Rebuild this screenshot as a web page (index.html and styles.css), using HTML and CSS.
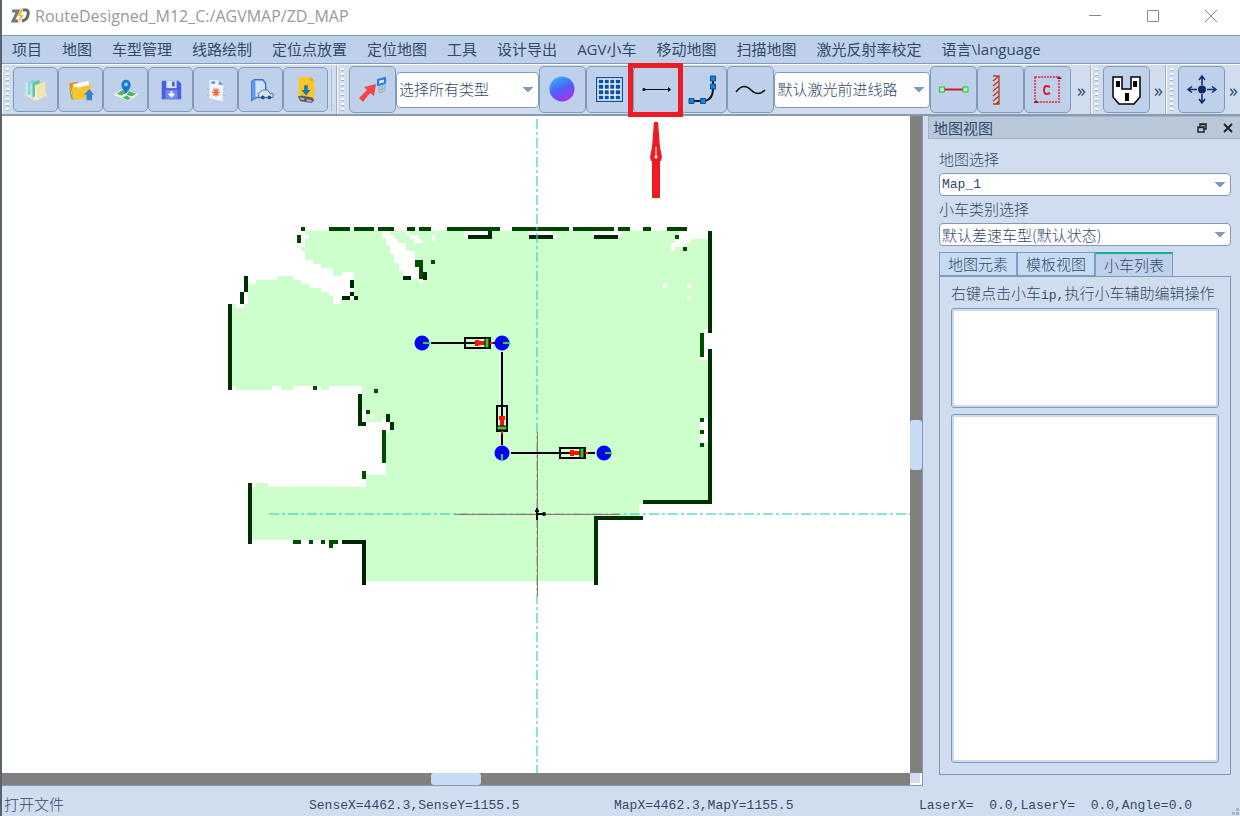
FILE: index.html
```html
<!DOCTYPE html>
<html lang="zh-CN">
<head>
  <meta charset="UTF-8">
  <meta name="viewport" content="width=device-width, initial-scale=1.0">
  <title>RouteDesigned_M12</title>
  <link rel="stylesheet" href="styles.css">
</head>
<body>
  <header class="titlebar">
    <svg class="app-icon" viewBox="0 0 20 18" aria-hidden="true">
      <path d="M2 4h6L3 14h5" fill="none" stroke="#777" stroke-width="3"/>
      <path d="M13 3h3q3 0 2 5t-6 6" fill="none" stroke="#666" stroke-width="3"/>
      <path d="M12 1L7 9h3l-2 8 6-9h-3l3-7z" fill="#eec049"/>
    </svg>
    <h1>RouteDesigned_M12_C:/AGVMAP/ZD_MAP</h1>
    <div class="window-buttons">
      <button aria-label="Minimize"><svg viewBox="0 0 12 12"><path d="M0 5.500h12"/></svg></button>
      <button aria-label="Maximize"><svg viewBox="0 0 12 12"><path d="M.5.5h11v11H.5z"/></svg></button>
      <button aria-label="Close"><svg viewBox="0 0 12 12"><path d="M0 0l12 12M12 0L0 12"/></svg></button>
    </div>
  </header>

  <nav class="menubar">
    <button>项目</button>
    <button>地图</button>
    <button>车型管理</button>
    <button>线路绘制</button>
    <button>定位点放置</button>
    <button>定位地图</button>
    <button>工具</button>
    <button>设计导出</button>
    <button>AGV小车</button>
    <button>移动地图</button>
    <button>扫描地图</button>
    <button>激光反射率校定</button>
    <button>语言\language</button>
  </nav>

  <div class="toolbar">
    <div class="tool-group file-group">
      <span class="handle"></span>
      <button class="tool" aria-label="Project">
        <svg viewBox="0 0 28 28">
          <path d="M1 19l11-5 15 5-13 7z" fill="#e9e6df"/>
          <path d="M1 19l13 7v2L1 21zM27 19l-13 7v2l13-7z" fill="#d3cfc8"/>
          <path d="M5 5l8-3v15l-8 3z" fill="#92d9da"/><path d="M3 7l2-2v15l-2-2z" fill="#c9eeee"/>
          <path d="M10 6l8-3v15l-8 4z" fill="#62c4a8"/><path d="M8 8l2-2v16l-2-2z" fill="#b7e8d9"/>
          <path d="M15 8l9-3v14l-9 4z" fill="#f1e6a8"/><path d="M13 9l2-1v15l-2-2z" fill="#faf5d4"/>
        </svg>
      </button>
      <button class="tool" aria-label="Open">
        <svg viewBox="0 0 28 28">
          <path d="M1 7l9-2 2 2 10-3 1 16H5z" fill="#e3920f"/>
          <path d="M5 8l17-4 1 6-16 4z" fill="#fff"/>
          <path d="M4 11l2 14 15-2 5-15-14 3z" fill="#fbc531"/>
          <path d="M1 9l5 16-3-2z" fill="#86b33c"/>
          <path d="M23 13l5 6h-2v6h-6v-6h-3z" fill="#2f83dc"/>
        </svg>
      </button>
      <button class="tool" aria-label="Map">
        <svg viewBox="0 0 28 28">
          <path d="M0 19l10-6 18 5-11 8z" fill="#e6f3e4"/>
          <path d="M4 18l6-4 5 3-6 3zM17 15l8 3-5 3-5-2zM10 22l5-2 4 3-3 2z" fill="#56b568"/>
          <path d="M14 18q-5-6-5-10a5 5 0 0 1 10 0q0 4-5 10z" fill="#1d76d2"/>
          <circle cx="14" cy="8" r="2" fill="#8fd0ff"/>
        </svg>
      </button>
      <button class="tool" aria-label="Save">
        <svg viewBox="0 0 28 28">
          <path d="M5 4h17l3 3v17H4V5z" fill="#4961e0"/>
          <path d="M9 4h11v8H9z" fill="#dbe4ff"/><path d="M15 5h3v5h-3z" fill="#4961e0"/>
          <path d="M8 14h13v10H8z" fill="#6f86f4"/>
          <path d="M14.500 15v6M11.500 18l3 3 3-3" stroke="#fff" stroke-width="2" fill="none"/>
        </svg>
      </button>
      <button class="tool" aria-label="Template">
        <svg viewBox="0 0 28 28">
          <path d="M7 3l10 1 5 5-1 17-14-3z" fill="#f2f5fd"/>
          <path d="M17 4l5 5-5-1z" fill="#4b8ce8"/><path d="M9 5h4v2H9z" fill="#367de0"/>
          <path d="M14 12v9M9.500 16.500h9M11 13l6 7M17 13l-6 7" stroke="#ec6a3b" stroke-width="1.500"/>
          <path d="M4 13h3M4 20h3M22 13h3M21 20h4" stroke="#b9b6bc"/>
        </svg>
      </button>
      <button class="tool" aria-label="Vehicle model">
        <svg viewBox="0 0 28 28">
          <path d="M4 5l3-2h9l3 4v15H9l-5 3z" fill="#d3e1f8" stroke="#3972d0" stroke-width="1.500"/>
          <path d="M4 5v19l4-2V4" fill="#639af0"/>
          <path d="M11 18l5-4h5l3 4h3v4H12z" fill="#d5e3f7" stroke="#47669c"/>
          <circle cx="16" cy="22" r="2" fill="#274d88"/><circle cx="23" cy="22" r="2" fill="#274d88"/>
        </svg>
      </button>
      <button class="tool" aria-label="Download">
        <svg viewBox="0 0 28 28">
          <path d="M6 0h13l4 4v19l-17-2z" fill="#fcc624"/><path d="M19 0v4h4z" fill="#e29d12"/>
          <path d="M12 9h4v5h3l-5 6-5-6h3z" fill="#1779b8"/>
          <path d="M5 21l4-1 12 2 2 3-3 3-12-2z" fill="#625f5e"/>
          <path d="M7 22l5 1v2l-4-1zM15 24l5 1v2l-5-1z" fill="#bcb8b3"/>
        </svg>
      </button>
      <span class="separator"></span>
    </div>

    <div class="tool-group route-group">
      <span class="handle"></span>
      <button class="tool large" aria-label="Select">
        <svg viewBox="0 0 28 28">
          <path d="M0 22l8-8-3-3 12-3-2 12-4-3-7 9z" fill="#f24646"/>
          <path d="M19 4l7-2v5l-7 2z" fill="#d7e7ff" stroke="#287be5" stroke-width="2"/>
          <path d="M20 11l6-2v6l-6 2zM20 14l6-2M23 10v6" fill="none" stroke="#a0aabb"/>
        </svg>
      </button>
      <select class="type-select" aria-label="选择类型"><option>选择所有类型</option></select>
      <button class="tool large" aria-label="Point">
        <svg viewBox="0 0 28 28">
          <defs>
            <linearGradient id="ball" x1="0.200" y1="0" x2="0.700" y2="1">
              <stop offset="0" stop-color="#35b4ff"/><stop offset="0.500" stop-color="#4a62fa"/><stop offset="1" stop-color="#b42bee"/>
            </linearGradient>
          </defs>
          <circle cx="13" cy="13" r="12.500" fill="url(#ball)"/>
        </svg>
      </button>
      <button class="tool large" aria-label="Grid">
        <svg viewBox="0 0 28 28">
          <path d="M0 1h27v25H0z" fill="#0d51a5"/>
          <path d="M2 3h23v21H2zM8 3v21M13.500 3v21M19 3v21M2 8h23M2 13.500h23M2 19h23" fill="none" stroke="#eef5ff" stroke-width="1.500"/>
        </svg>
      </button>
      <div class="highlighted">
        <button class="tool large" aria-label="Straight route">
          <svg viewBox="0 0 28 28">
            <path d="M1 13.500h25" stroke="#111"/><circle cx="1" cy="13.500" r="1.500"/><path d="M25 11l3 2.500-3 2.500z"/>
          </svg>
        </button>
        <svg class="pointer" viewBox="0 0 14 77" aria-hidden="true">
          <path d="M5 0h4l1 12 1 13 2 10-1 4h-1v37H3V39H2l-1-4 2-10 1-13z" fill="#ed1c24"/>
          <path d="M7 25v10" stroke="#fff"/><circle cx="7" cy="35" r="1.500" fill="#fff"/>
        </svg>
      </div>
      <button class="tool large" aria-label="Curve route">
        <svg viewBox="0 0 28 28">
          <path d="M1 25h14q8-2 8-12V2" fill="none" stroke="#111" stroke-width="2"/>
          <path d="M-1 22.500h5v5h-5zM10.500 22.500h5v5h-5zM20.500 8h5v5h-5zM20.500 0h5v5h-5z" fill="#1484dc" stroke="#0b4f93"/>
        </svg>
      </button>
      <button class="tool large" aria-label="Spline route">
        <svg viewBox="0 0 28 28">
          <path d="M-1 16C5 8 10 10 14 14s9 5 14 0" fill="none" stroke="#111" stroke-width="1.500"/>
        </svg>
      </button>
      <select class="line-select" aria-label="线路类型"><option>默认激光前进线路</option></select>
      <button class="tool large" aria-label="Segment">
        <svg viewBox="0 0 28 28">
          <path d="M4 13.500h19" stroke="#d3123c" stroke-width="2"/>
          <path d="M-.500 11h5v5h-5zM23 11h5v5h-5z" fill="#b9ecc2" stroke="#1fc329"/>
        </svg>
      </button>
      <button class="tool large" aria-label="Wall">
        <svg viewBox="0 0 28 28">
          <path d="M6 0h6v28H6M12 0L6 5M12 5l-6 5M12 10l-6 5M12 15l-6 5M12 20l-6 5M12 25l-3 3" fill="none" stroke="#b73c18" stroke-width="1.300"/>
        </svg>
      </button>
      <button class="tool large" aria-label="Area">
        <svg viewBox="0 0 28 28">
          <path d="M1 1h24v25H1z" fill="none" stroke="#ed2434" stroke-width="1.500" stroke-dasharray="2 1"/>
          <path d="M23 3l2-3 3 3zM0 27l2-3 2 3z" fill="#8b1024"/>
          <path d="M16 11q-6-3-6 3t6 3" fill="none" stroke="#df1930" stroke-width="2"/>
        </svg>
      </button>
      <span class="more">»</span>
    </div>

    <div class="tool-group">
      <span class="handle"></span>
      <button class="tool large" aria-label="Station">
        <svg viewBox="0 0 28 28">
          <path d="M0 1h9v12h9V1h9v20l-6 7H6l-6-7z" fill="#fff" stroke="#000" stroke-width="1.500"/>
          <path d="M3 5h4v6H3zM20 5h4v6h-4zM12 17h4v8h-4z"/>
        </svg>
      </button>
      <span class="more">»</span>
    </div>

    <div class="tool-group">
      <span class="handle"></span>
      <button class="tool large" aria-label="Move">
        <svg viewBox="0 0 28 28">
          <path d="M14 9V1M11 4l3-4 3 4M14 18v8M11 23l3 4 3-4M9 13.500H1M4 10.500l-4 3 4 3M19 13.500h8M24 10.500l4 3-4 3" fill="none" stroke="#102872" stroke-width="1.500"/>
          <circle cx="14" cy="13.500" r="4" fill="#102872"/>
        </svg>
      </button>
      <span class="more">»</span>
    </div>
  </div>

  <main>
    <section class="map-view">
      <div class="map-canvas">
        <svg viewBox="2 116 908 657" preserveAspectRatio="xMidYMid slice" role="img" aria-label="Map_1">
          <!-- scanned floor -->
          <g shape-rendering="crispEdges">
            <path fill="#ccffcc" d="M305 231H708V500H643V504H639V516H596V581H366V540H252V487H366V475H386V434H390V430H386V422H382V422H366V410H362V386H232V304H236V308H244V304H248V284H256V280H277V276H293V280H301V284H309V288H321V292H329V296H333V300H354V272H346V276H333V268H321V264H313V260H305V251H301V247H305V239H309V235H305z"/>
            <path fill="#ccffcc" d="M236 386h36v4h-36zM281 386h12v4h-12zM321 386h8v4h-8zM256 483h12v4h-12z"/>
            <path fill="#fff" d="M382 231h8v4h4v4h4v4h8v8h9v9h4v12h8v7h-4v4h-4v-4h-16v-8h-4v-8h-5v-9h-4v-8h-4v-8h-4z"/>
            <path fill="#fff" d="M406 231h4v4h8v4h4v4h-8v-4h-4v-4h-4zM432 235h3v7h-3zM464 231h24v4h-20v4h-4zM529 231h24v4h4v4h-28zM594 231h28v4h-28z"/>
            <path fill="#fff" d="M679 231h29v8h-17v4h-4v4h-12v4h-4v-8h4v-4h4zM663 284h4v4h-4zM687 284h4v4h-4zM687 296h4v4h-4z"/>
            <path fill="#fff" d="M704 329h8v24h-4v7h-8v-27h4zM700 418h8v25h-8zM342 272h12v24h-12zM333 300h8v4h-8zM362 410h4v12h-4zM370 414h4v4h-4zM382 418h8v12h-4v-4h-4zM386 430h4v4h-4z"/>
          </g>
          <!-- walls -->
          <g shape-rendering="crispEdges">
            <path fill="#004400" d="M301 227h4v4h-4zM297 235h4v8h-4zM329 227h21v4h-21zM354 227h20v4h-20zM378 227h16v4h-16zM407 227h8v4h-8zM419 227h12v4h-12zM447 227h53v4h-53zM512 227h57v4h-57zM573 227h41v4h-41zM618 227h12v4h-12zM643 227h8v4h-8zM667 227h20v4h-20z"/>
            <path fill="#002800" d="M468 235h20v-4h4v8h-24zM529 235h24v4h-24zM594 235h24v4h-24zM350 280h4v8h-4zM350 292h4v4h4v4h-4v-4h-4v4h-8v-4h8zM403 276h8v4h-8zM423 272h4v8h-4z"/>
            <path fill="#004d00" d="M675 235h4v4h-4zM683 247h4v4h-4zM415 260h8v19h-4v-12h-4zM431 260h4v4h-4zM313 386h4v4h-4zM374 389h4v4h-4zM366 410h4v4h-4zM362 471h4v8h-4zM700 418h4v4h-4zM700 430h4v4h-4zM700 443h4v4h-4zM700 333h4v24h-4zM382 430h4v33h-4z"/>
            <path fill="#003000" d="M244 276h4v16h-4v12h-4v-12h4zM228 304h4v86h-4zM358 394h4v28h4v4h-8zM386 414h4v8h4v8h-4v-8h-4zM248 483h4v61h-4z"/>
            <path fill="#003000" d="M708 231h4v102h-4zM708 349h4v155h-69v-4h65zM594 516h49v4h-45v65h-4z"/>
            <path fill="#004d00" d="M293 540h8v4h-8zM309 540h4v4h-4zM321 540h4v4h-4zM329 540h9v4h-5v4h-4z"/>
            <path fill="#002200" d="M342 540h24v45h-4v-41h-20z"/>
          </g>
          <!-- axes -->
          <g fill="none" shape-rendering="crispEdges">
            <path d="M537 119V773M269 514H910" stroke="#40cdc8" stroke-opacity="0.600" stroke-width="2" stroke-dasharray="10 3 3 3"/>
            <path d="M455 514.500H619" stroke="#b0685a"/>
            <path d="M537.500 432V596" stroke="#b0685a"/>
          </g>
          <path d="M537 508v12M535 511h4M537 514h8" stroke="#000" stroke-width="2"/><circle cx="544" cy="514" r="2"/>
          <!-- routes -->
          <path d="M431 343h64M502 352v93M511 453h84" stroke="#000" stroke-width="2" fill="none"/>
          <defs>
            <g id="car">
              <path d="M-13-5h25V5h-25z" fill="none" stroke="#000" stroke-width="2"/>
              <path d="M-3-3h4v1h6v4H1v1h-4zM12-1h3v2h-3z" fill="#ff1000"/>
              <path d="M7-5h4V5H7z" fill="#33cc33" stroke="#000"/>
            </g>
            <g id="node">
              <circle r="7.500" fill="#0000ff"/><path d="M1 0h7" stroke="#16df4f" stroke-width="2"/><circle r="1"/>
            </g>
          </defs>
          <use href="#car" x="478" y="343"/>
          <use href="#car" transform="translate(502 419) rotate(90)"/>
          <use href="#car" x="573" y="453"/>
          <use href="#node" x="422" y="343"/>
          <use href="#node" x="502" y="343"/>
          <use href="#node" transform="translate(502 453) rotate(90)"/>
          <use href="#node" x="604" y="453"/>
        </svg>
      </div>
      <div class="scroll-v"><span></span></div>
      <div class="scroll-h"><span></span></div>
      <div class="scroll-corner"></div>
    </section>

    <aside class="dock">
      <div class="dock-title">
        <h2>地图视图</h2>
        <button aria-label="Float"><svg viewBox="0 0 12 12"><path d="M4 4V2h6v5H8M4 2.500h6M2 5h6v5H2zM2 5.500h6" fill="none" stroke="#222" stroke-width="1.500"/></svg></button>
        <button aria-label="Close panel"><svg viewBox="0 0 12 12"><path d="M2 2l8 8M10 2l-8 8" stroke="#222" stroke-width="2"/></svg></button>
      </div>
      <div class="dock-body">
        <label for="map">地图选择</label>
        <select id="map" class="mono"><option>Map_1</option></select>
        <label for="vehicle">小车类别选择</label>
        <select id="vehicle"><option>默认差速车型(默认状态)</option></select>
        <div class="tabs" role="tablist">
          <button role="tab">地图元素</button>
          <button role="tab">模板视图</button>
          <button role="tab" class="active" aria-selected="true">小车列表</button>
        </div>
        <div class="tab-panel" role="tabpanel">
          <p>右键点击小车<span class="mono">ip,</span>执行小车辅助编辑操作</p>
          <div class="list short"></div>
          <div class="list"></div>
        </div>
      </div>
    </aside>
  </main>

  <footer class="statusbar">
    <span>打开文件</span>
    <span class="mono">SenseX=4462.3,SenseY=1155.5</span>
    <span class="mono">MapX=4462.3,MapY=1155.5</span>
    <span class="mono">LaserX=  0.0,LaserY=  0.0,Angle=0.0</span>
    <svg class="grip" viewBox="0 0 8 8" aria-hidden="true"><path d="M4 0h3v3H4zM0 4h3v3H0zM4 4h3v3H4z"/></svg>
  </footer>
</body>
</html>
```
FILE: styles.css
```css
:root {
  --panel: #d0ddee;
  --bar: #bfd1ea;
  --line: #7f9aba;
  --text: #314a6b;
}

* {
  margin: 0;
  padding: 0;
  box-sizing: border-box;
}

body {
  display: flex;
  flex-direction: column;
  height: 100vh;
  border-left: 2px solid #59626e;
  background: var(--panel);
  color: var(--text);
  font-family: "Noto Sans CJK SC", sans-serif;
  font-size: 15px;
  font-weight: 300;
  line-height: 20px;
  overflow: hidden;
}

button,
select {
  font: inherit;
  color: inherit;
  border: none;
  background: none;
}

.mono {
  font-family: "Liberation Mono", monospace;
  font-size: 13px;
}

/* Title bar */
.titlebar {
  display: flex;
  align-items: center;
  height: 35px;
  flex: none;
  background: #fff;
  padding-left: 8px;
}

.app-icon {
  width: 20px;
  height: 18px;
  margin: 0 5px 4px 0;
}

.titlebar h1 {
  flex: 1;
  padding-bottom: 3px;
  font: 400 16px/20px "Open Sans", sans-serif;
  color: #999;
}

.window-buttons {
  display: flex;
  margin-bottom: 3px;
}

.window-buttons button {
  width: 58px;
  height: 32px;
}

.window-buttons svg {
  width: 12px;
  height: 12px;
  fill: none;
  stroke: #888;
}

/* Menu */
.menubar {
  display: flex;
  flex: none;
  height: 29px;
  background: var(--bar);
  border-top: 1px solid var(--line);
  border-bottom: 1px solid var(--line);
}

.menubar button {
  padding: 0 10px 2px;
  font-family: "Open Sans", "Noto Sans CJK SC", sans-serif;
  font-weight: 400;
  white-space: nowrap;
}

/* Toolbar */
.toolbar {
  display: flex;
  flex: none;
  height: 52px;
  border-top: 1px solid #fff;
  border-bottom: 2px solid #8a9bb0;
}

.tool-group {
  display: flex;
  align-items: center;
  flex: none;
  padding-left: 3px;
  border-left: 1px solid #fff;
  border-right: 1px solid #9cafc7;
}

.tool-group:last-child {
  border-right: none;
}

.route-group {
  flex: 1;
}

.handle {
  width: 3px;
  height: 44px;
  margin-right: 5px;
  background: repeating-linear-gradient(#fff 0 2px, #9fb0c5 2px 3px, transparent 3px 5px);
}

.file-group .handle {
  margin-right: 4px;
}

.tool {
  display: flex;
  align-items: center;
  justify-content: center;
  flex: none;
  width: 45px;
  height: 45px;
  border: 1px solid var(--line);
  border-radius: 5px;
  background: var(--bar);
}

.tool.large {
  width: 47px;
  height: 47px;
}

.tool svg {
  width: 26px;
  height: 26px;
  overflow: visible;
}

.tool.large svg {
  width: 28px;
  height: 28px;
}

.separator {
  width: 1px;
  height: 42px;
  margin: 0 4px 0 3px;
  background: #a9b9ce;
}

.more {
  width: 15px;
  padding-left: 2px;
  text-align: center;
  font: 400 18px/20px "Open Sans", sans-serif;
}

.route-group .more {
  width: 19px;
}

/* Callout drawn over the straight route tool */
.highlighted {
  position: relative;
  z-index: 1;
}

.highlighted::after {
  content: "";
  position: absolute;
  inset: -3px -3px -4px -5px;
  border: 5px solid #ed1c24;
}

.pointer {
  position: absolute;
  top: 56px;
  left: 16px;
  width: 14px;
  height: 77px;
}

select {
  appearance: none;
  height: 23px;
  padding: 0 24px 0 2px;
  border: 1px solid var(--line);
  border-radius: 4px;
  background:
    linear-gradient(to bottom right, #7f9aba 50%, transparent 51%) no-repeat right 5px center / 5px 5px,
    linear-gradient(to bottom left, #7f9aba 50%, transparent 51%) no-repeat right 10px center / 5px 5px,
    #fff;
}

.type-select,
.line-select {
  height: 36px;
  min-width: 0;
  padding-bottom: 2px;
}

.type-select {
  flex: 142 1 0;
}

.line-select {
  flex: 157 1 0;
}

/* Map */
main {
  display: flex;
  flex: 1;
  min-height: 0;
}

.map-view {
  display: grid;
  flex: 1;
  min-width: 0;
  grid-template-columns: 1fr 12px;
  grid-template-rows: 1fr 12px;
  border-right: 1px solid var(--line);
  border-bottom: 1px solid var(--line);
}

.map-canvas {
  min-width: 0;
  min-height: 0;
  background: #fff;
}

.map-canvas svg {
  display: block;
  width: 100%;
  height: 100%;
}

.scroll-v,
.scroll-h {
  display: flex;
  align-items: center;
  justify-content: center;
  background: #808080;
}

.scroll-v span {
  width: 12px;
  height: 50px;
  border-radius: 3px;
  background: #c9dbf2;
}

.scroll-h span {
  width: 50px;
  height: 12px;
  border-radius: 3px;
  background: #c9dbf2;
}

.scroll-corner {
  border-right: 2px solid #fff;
  border-bottom: 2px solid #fff;
}

/* Dock */
.dock {
  display: flex;
  flex-direction: column;
  flex: none;
  width: 312px;
  margin-left: 5px;
}

.dock-title {
  display: flex;
  align-items: center;
  height: 23px;
  padding: 0 6px 0 4px;
  background: #b9c8d9;
  border: 1px solid #9fb2c9;
  border-right: none;
}

.dock-title h2 {
  flex: 1;
  font-size: 15px;
  font-weight: 400;
}

.dock-title button {
  width: 12px;
  height: 12px;
  margin-left: 14px;
}

.dock-title svg {
  display: block;
  width: 12px;
  height: 12px;
}

.dock-body {
  display: flex;
  flex: 1;
  flex-direction: column;
  min-height: 0;
  padding: 7px 9px 11px 11px;
}

.dock-body label {
  height: 27px;
  line-height: 26px;
}

.tabs {
  display: flex;
  height: 24px;
  margin-top: 6px;
}

.tabs button {
  width: 78px;
  border: 1px solid var(--line);
  background: #c7dbf5;
  line-height: 18px;
}

.tabs .active {
  border-top: 2px solid #16b0a0;
  border-bottom: none;
  background: var(--bar);
}

.tab-panel {
  display: flex;
  flex: 1;
  flex-direction: column;
  gap: 6px;
  min-height: 0;
  padding: 5px 11px 11px;
  border: 1px solid var(--line);
}

.tab-panel p {
  height: 20px;
  line-height: 22px;
  white-space: nowrap;
}

.list {
  flex: 1;
  border: 1px solid var(--line);
  border-radius: 3px;
  background: #fff;
  box-shadow: inset 0 0 0 2px #c9dbf2;
}

.list.short {
  flex: none;
  height: 100px;
}

/* Status bar */
.statusbar {
  position: relative;
  display: grid;
  grid-template-columns: repeat(4, 1fr);
  align-items: center;
  flex: none;
  height: 30px;
  padding: 6px 16px 0 2px;
}

.statusbar span {
  white-space: pre;
}

.statusbar .mono {
  padding-top: 3px;
}

.grip {
  position: absolute;
  right: 0;
  bottom: 0;
  width: 8px;
  height: 8px;
  fill: #aab2bd;
}
```
